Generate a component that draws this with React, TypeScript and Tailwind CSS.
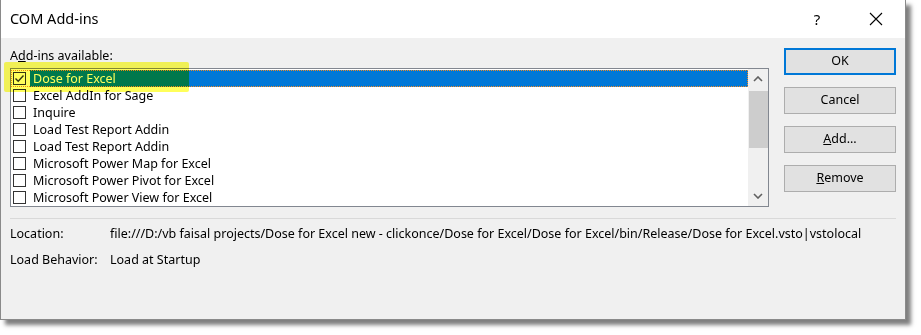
import React from "react";

const addins = [
  "Dose for Excel",
  "Excel AddIn for Sage",
  "Inquire",
  "Load Test Report Addin",
  "Load Test Report Addin",
  "Microsoft Power Map for Excel",
  "Microsoft Power Pivot for Excel",
  "Microsoft Power View for Excel",
];

function CheckBox({ checked }: { checked?: boolean }) {
  return (
    <div className="w-[13px] h-[13px] border border-[#333] bg-white flex items-center justify-center shrink-0">
      {checked && (
        <svg width="11" height="11" viewBox="0 0 11 11">
          <path d="M1.5 5.5 L4.2 8.2 L9.5 2.5" fill="none" stroke="#333" strokeWidth="1.4" />
        </svg>
      )}
    </div>
  );
}

function Chevron({ up }: { up?: boolean }) {
  return (
    <svg width="10" height="6" viewBox="0 0 10 6">
      <path d={up ? "M1 5 L5 1 L9 5" : "M1 1 L5 5 L9 1"} fill="none" stroke="#606060" strokeWidth="1.6" />
    </svg>
  );
}

function DlgButton({ children, primary }: { children: React.ReactNode; primary?: boolean }) {
  return (
    <button
      className={
        "w-[112px] h-[27px] bg-[#e1e1e1] text-[12.5px] text-black flex items-center justify-center " +
        (primary ? "border-2 border-[#0078d7]" : "border border-[#adadad]")
      }
    >
      {children}
    </button>
  );
}

export default function App() {
  return (
    <div className="w-[921px] h-[335px] bg-white overflow-hidden" style={{ fontFamily: "'Noto Sans', sans-serif" }}>
      <div className="relative w-[906px] h-[320px] bg-[#f0f0f0] border border-t-0 border-[#8a8a8a] shadow-[5px_5px_4px_rgba(0,0,0,0.5)] flex flex-col">
        {/* Title bar */}
        <div className="h-[38px] bg-white flex items-center pl-[9px] text-black">
          <span className="text-[14.5px] flex-1">COM Add-ins</span>
          <span className="text-[15px] w-[20px] text-center mr-[42px]">?</span>
          <svg width="14" height="14" viewBox="0 0 14 14" className="mr-[22px]">
            <path d="M1 1 L13 13 M13 1 L1 13" stroke="#000" strokeWidth="1.1" />
          </svg>
        </div>

        {/* Body */}
        <div className="flex pl-[9px] pt-[10px] text-[12.5px] text-black">
          <div className="w-[759px] flex flex-col">
            <div className="h-[16px] leading-[16px]">
              A<span className="underline">d</span>d-ins available:
            </div>
            <div className="mt-[4px] h-[139px] border border-[#828790] bg-white flex">
              <div className="flex-1 flex flex-col pt-[1px]">
                {addins.map((name, i) => (
                  <div
                    key={i}
                    className={
                      "h-[17px] flex items-center pl-[2px] shrink-0 " +
                      (i === 0 ? "outline outline-1 outline-dotted outline-[#f08a24] -outline-offset-1" : "")
                    }
                  >
                    <CheckBox checked={i === 0} />
                    <div
                      className={
                        "ml-[4px] pl-[3px] h-[17px] leading-[17px] " +
                        (i === 0 ? "flex-1 bg-[#0078d7] text-white" : "")
                      }
                    >
                      {name}
                    </div>
                  </div>
                ))}
              </div>
              <div className="w-[20px] bg-[#f0f0f0] flex flex-col items-center">
                <div className="h-[20px] flex items-center justify-center">
                  <Chevron up />
                </div>
                <div className="w-[19px] h-[57px] mt-[2px] bg-[#cdcdcd]" />
                <div className="flex-1" />
                <div className="h-[20px] flex items-center justify-center">
                  <Chevron />
                </div>
              </div>
            </div>
          </div>
          <div className="ml-[15px] flex flex-col gap-[12px]">
            <DlgButton primary>OK</DlgButton>
            <DlgButton>Cancel</DlgButton>
            <DlgButton>
              <span className="underline">A</span>dd...
            </DlgButton>
            <DlgButton>
              <span className="underline">R</span>emove
            </DlgButton>
          </div>
        </div>

        <div className="mx-[9px] mt-[11px] h-px bg-[#d9d9d9]" />

        <div className="pl-[9px] pt-[7px] text-[12.5px] text-black flex flex-col gap-[10px]">
          <div className="flex h-[16px] leading-[16px]">
            <span className="w-[100px]">Location:</span>
            <span>
              file:///D:/vb faisal projects/Dose for Excel new - clickonce/Dose for Excel/Dose for Excel/bin/Release/Dose for Excel.vsto|vstolocal
            </span>
          </div>
          <div className="flex h-[16px] leading-[16px]">
            <span className="w-[100px]">Load Behavior:</span>
            <span>Load at Startup</span>
          </div>
        </div>

        {/* Highlighter annotation */}
        <div className="absolute left-[3px] top-[62px] w-[185px] h-[30px] bg-[#ffff5a] mix-blend-multiply rounded-[2px] pointer-events-none" />
      </div>
    </div>
  );
}
